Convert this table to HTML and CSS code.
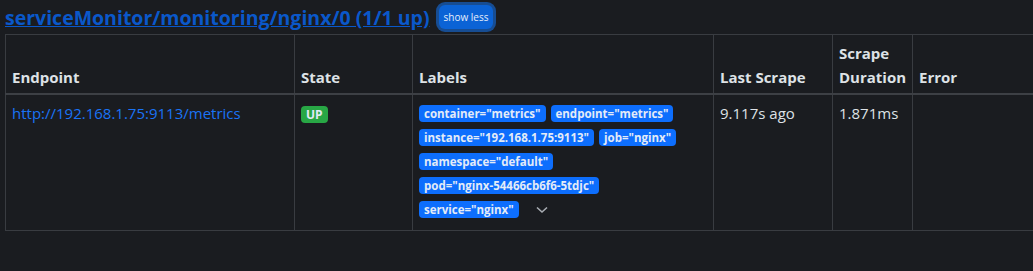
FILE: index.html
```html
<!DOCTYPE html>
<html lang="en">
<head>
  <meta charset="UTF-8" />
  <title>Targets</title>
  <link rel="stylesheet" href="styles.css">
</head>
<body>

<div class="pool-head">
  <a href="#" class="pool-title">serviceMonitor/monitoring/nginx/0 (1/1 up)</a>
  <button class="btn-toggle">show less</button>
</div>

<table class="targets">
  <thead>
    <tr>
      <th class="col-endpoint">Endpoint</th>
      <th class="col-state">State</th>
      <th class="col-labels">Labels</th>
      <th class="col-last">Last Scrape</th>
      <th class="col-dur">Scrape Duration</th>
      <th class="col-error">Error</th>
    </tr>
  </thead>
  <tbody>
    <tr>
      <td><a href="#" class="endpoint">http://192.168.1.75:9113/metrics</a></td>
      <td><span class="badge badge-up">UP</span></td>
      <td>
        <div class="labels">
          <span class="badge badge-label">container="metrics"</span>
          <span class="badge badge-label">endpoint="metrics"</span>
          <span class="badge badge-label">instance="192.168.1.75:9113"</span>
          <span class="badge badge-label">job="nginx"</span>
          <span class="badge badge-label">namespace="default"</span>
          <span class="badge badge-label">pod="nginx-54466cb6f6-5tdjc"</span>
          <span class="badge badge-label">service="nginx"</span>
          <button class="chevron" aria-label="collapse">
            <svg width="12" height="8" viewBox="0 0 12 8"><path d="M1 1.5 L6 6 L11 1.5" fill="none" stroke="#a9adb3" stroke-width="1.6"/></svg>
          </button>
        </div>
      </td>
      <td>9.117s ago</td>
      <td>1.871ms</td>
      <td></td>
    </tr>
  </tbody>
</table>

</body>
</html>
```

FILE: styles.css
```css
* {
  margin: 0; padding: 0; box-sizing: border-box;
  font-family: 'Open Sans', sans-serif;
}

body {
  background: #1a1c20;
  color: #dee2e6;
  padding: 2px 5px;
  overflow: hidden;
}

.pool-head {
  display: flex;
  align-items: center;
  gap: 9px;
  height: 30px;
}

.pool-title {
  color: #0a58ca;
  font-size: 19.5px;
  font-weight: 700;
  text-decoration: underline;
}

.btn-toggle {
  background: #0b63d6;
  color: #e6eefb;
  border: none;
  border-radius: 6px;
  box-shadow: 0 0 0 3px #174d93;
  font-size: 10px;
  padding: 5px 5px;
}

table.targets {
  border-collapse: collapse;
  width: 1090px;
  margin-top: 2px;
}

.targets th, .targets td {
  border: 1px solid #393c41;
  padding: 6px 6px;
  text-align: left;
  font-size: 15px;
}

.targets th {
  vertical-align: bottom;
  font-weight: 700;
  line-height: 24px;
  border-bottom: 2px solid #3d4045;
  padding-bottom: 4px;
}

.targets td {
  vertical-align: top;
  height: 136px;
  padding-top: 8px;
}

.col-endpoint { width: 289px; }
.col-state { width: 118px; }
.col-labels { width: 301px; }
.col-last { width: 119px; }
.col-dur { width: 77px; }

.endpoint {
  color: #1a73f5;
  text-decoration: none;
}

.badge {
  display: inline-block;
  font-size: 11.5px;
  font-weight: 700;
  line-height: 17px;
  padding: 0 5px;
  border-radius: 4px;
  color: #e3ebf7;
}

.badge-up {
  background: #28a745;
  font-size: 12px;
  margin-top: 2px;
}

.badge-label {
  background: #0d6efd;
}

.labels {
  display: flex;
  flex-wrap: wrap;
  gap: 7px 5px;
  align-items: center;
  max-width: 280px;
  margin-top: 2px;
}

.chevron {
  background: none;
  border: none;
  padding: 0 8px;
  display: flex;
  align-items: center;
  margin-left: 4px;
}
```
